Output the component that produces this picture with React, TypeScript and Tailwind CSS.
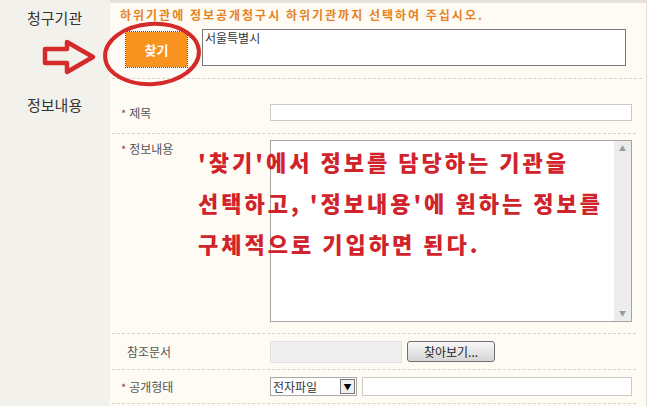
import React from 'react';

const ko = { fontFamily: '"Noto Sans CJK KR", "Noto Sans", sans-serif' };

function Star() {
  return <span className="text-[#8a4a2a] text-[11px] mr-[3px]">*</span>;
}

export default function App() {
  return (
    <div className="relative w-[647px] h-[406px] overflow-hidden bg-[#f3f1ec] flex flex-col text-[#555]" style={ko}>
      {/* 청구기관 */}
      <div className="flex h-[80px]">
        <div className="w-[110px] shrink-0 pl-[27px] pt-[8px] text-[15px] leading-[20px] text-[#333]">청구기관</div>
        <div className="flex-1 bg-[#fdfbf4] border-t-[3px] border-[#e6e2da] border-r border-r-[#e2ddd2] pr-[4px]">
          <div className="h-[76px] border-b border-dashed border-[#d8d3c9] ml-[2px]">
            <p className="pl-[8px] pt-[5px] text-[12px] leading-[14px] font-bold tracking-[2px] text-[#e5821f]">
              하위기관에 정보공개청구시 하위기관까지 선택하여 주십시오.
            </p>
            <div className="flex items-start mt-[7px] pl-[13px]">
              <div className="mt-[2px] border border-dotted border-[#444]">
                <div className="w-[61px] h-[35px] bg-[#f7931e] flex items-center justify-center text-white text-[13px] font-bold">찾기</div>
              </div>
              <div className="ml-[14px] w-[424px] h-[37px] bg-white border border-[#7a7a7a] px-[2px] text-[12px] leading-[15px] text-[#333]">서울특별시</div>
            </div>
          </div>
        </div>
      </div>

      {/* 정보내용 */}
      <div className="flex flex-1">
        <div className="w-[110px] shrink-0 pl-[27px] pt-[15px] text-[15px] leading-[20px] text-[#333]">정보내용</div>
        <div className="flex-1 bg-[#fdfbf4] border-r border-[#e2ddd2] pr-[10px] pl-[2px] text-[12px]">
          <div className="flex items-start h-[54px] pt-[24px] border-b border-dashed border-[#d8d3c9]">
            <div className="w-[158px] pl-[9px] leading-[17px]"><Star />제목</div>
            <div className="w-[362px] h-[17px] bg-white border border-[#cfcbc2]" />
          </div>
          <div className="flex items-start h-[200px] pt-[6px] border-b border-dashed border-[#d8d3c9]">
            <div className="w-[158px] pl-[9px] leading-[17px]"><Star />정보내용</div>
            <div className="w-[362px] h-[182px] bg-white border border-[#a3a3a3] flex justify-end">
              <div className="w-[17px] h-full bg-[#ececec] flex flex-col items-center justify-between py-[4px] text-[7px] text-[#9a9a9a] leading-none">
                <span>▲</span>
                <span>▼</span>
              </div>
            </div>
          </div>
          <div className="flex items-center h-[36px] border-b border-dashed border-[#d8d3c9]">
            <div className="w-[158px] pl-[15px]">참조문서</div>
            <div className="w-[132px] h-[22px] bg-[#efefef] border border-[#e2e2e2]" />
            <div className="ml-[5px] w-[88px] h-[21px] rounded-[3px] border border-[#6f6f6f] bg-gradient-to-b from-[#f7f7f7] to-[#d6d6d6] flex items-center justify-center text-[12px] text-[#222]">찾아보기...</div>
          </div>
          <div className="flex items-center h-[34px] border-b border-dashed border-[#d8d3c9]">
            <div className="w-[158px] pl-[9px]"><Star />공개형태</div>
            <div className="w-[87px] h-[19px] bg-white border border-[#a8a8a8] flex items-center justify-between pl-[2px] pr-[1px] text-[12px] text-[#333]">
              <span className="leading-none">전자파일</span>
              <span className="w-[15px] h-[15px] border border-[#777] bg-[#f0f0f0] flex items-center justify-center text-[8px] text-black leading-none">▼</span>
            </div>
            <div className="ml-[5px] w-[270px] h-[19px] bg-white border border-[#cfcbc2]" />
          </div>
        </div>
      </div>

      {/* annotation overlay */}
      <svg className="absolute left-0 top-0 pointer-events-none" width="647" height="406">
        <path d="M45,49 H67 V42 L93,57 L67,72 V63 H45 Z" fill="none" stroke="#d42a2a" strokeWidth="4.5" strokeLinejoin="round" />
        <ellipse cx="152" cy="54" rx="47" ry="30" fill="none" stroke="#d42a2a" strokeWidth="4" transform="rotate(-4 152 54)" />
      </svg>
      <div className="absolute left-[198px] top-[141px] text-[22px] leading-[41px] font-black tracking-[3px] text-[#d0232b] whitespace-nowrap">
        <p>'찾기'에서 정보를 담당하는 기관을</p>
        <p>선택하고, '정보내용'에 원하는 정보를</p>
        <p>구체적으로 기입하면 된다.</p>
      </div>
    </div>
  );
}
